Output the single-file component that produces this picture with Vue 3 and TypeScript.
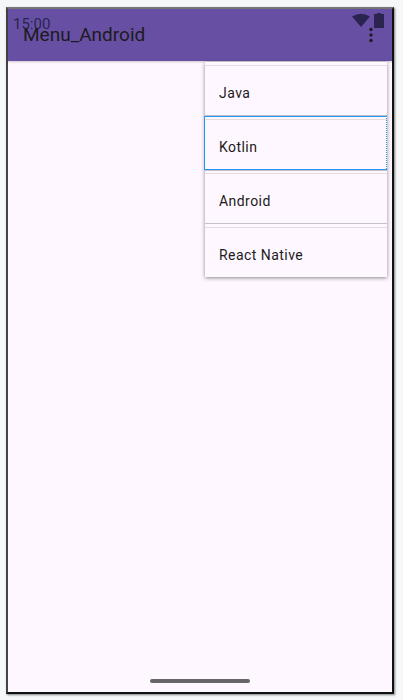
<script setup lang="ts">
const items = ['Java', 'Kotlin', 'Android', 'React Native']
</script>

<template>
  <div class="page">
    <div class="phone">
      <header class="app-bar">
        <span class="clock">15:00</span>
        <span class="title">Menu_Android</span>
        <svg class="wifi" width="18" height="14" viewBox="0 0 18 14">
          <path d="M0 3.5 Q9 -2 18 3.5 L9 14 Z" fill="#2b2350" />
        </svg>
        <svg class="battery" width="10" height="15" viewBox="0 0 10 15">
          <path d="M3 0 H7 V1 H10 V15 H0 V1 H3 Z" fill="#2b2350" />
        </svg>
        <svg class="more" width="6" height="16" viewBox="0 0 6 16">
          <circle cx="3" cy="2.5" r="1.7" fill="#1d1b20" />
          <circle cx="3" cy="8" r="1.7" fill="#1d1b20" />
          <circle cx="3" cy="13.5" r="1.7" fill="#1d1b20" />
        </svg>
      </header>
      <ul class="menu">
        <li v-for="item in items" :key="item" class="menu__item" :class="{ 'menu__item--focus': item === 'Kotlin' }">
          {{ item }}
        </li>
      </ul>
      <div class="home-bar"></div>
    </div>
  </div>
</template>

<style>
html,
body {
  margin: 0;
  background: #f6f7f9;
}
</style>

<style scoped>
.page {
  box-sizing: border-box;
  width: 403px;
  height: 700px;
  padding: 7px 9px 6px 6px;
  font-family: Roboto, "Liberation Sans", sans-serif;
}

.phone {
  position: relative;
  box-sizing: border-box;
  height: 100%;
  background: #fef7ff;
  border-style: solid;
  border-width: 2px;
  border-color: #777 #111 #111 #444;
  box-shadow: 1px 1px 2px rgba(0, 0, 0, 0.5);
}

.app-bar {
  position: relative;
  height: 52px;
  background: #6750a4;
  box-shadow: 0 1px 2px rgba(0, 0, 0, 0.2);
}

.clock {
  position: absolute;
  left: 5px;
  top: 7px;
  font-size: 15px;
  line-height: 16px;
  color: #2b2350;
}

.title {
  position: absolute;
  left: 15px;
  top: 15px;
  font-size: 19px;
  line-height: 22px;
  color: #1d1b20;
}

.wifi {
  position: absolute;
  left: 344px;
  top: 4px;
}

.battery {
  position: absolute;
  left: 366px;
  top: 4px;
}

.more {
  position: absolute;
  left: 360px;
  top: 18px;
}

.menu {
  position: absolute;
  left: 197px;
  top: 53px;
  width: 182px;
  margin: 0;
  padding: 0;
  list-style: none;
  background: #fef7ff;
  box-shadow: 0 1px 4px rgba(0, 0, 0, 0.45);
}

.menu__item {
  position: relative;
  box-sizing: border-box;
  display: flex;
  align-items: center;
  height: 54px;
  padding: 9px 14px 0;
  font-size: 14px;
  letter-spacing: 0.45px;
  color: #1d1b20;
  background: linear-gradient(#e3dde6, #e3dde6) 0 3px / 100% 1px no-repeat;
  border-bottom: 1px solid #c4c0c8;
}

.menu__item:last-child {
  height: 53px;
  border-bottom: 0;
}

.menu__item--focus {
  z-index: 1;
  border-bottom-color: transparent;
}

.menu__item--focus::after {
  content: "";
  position: absolute;
  inset: 0 0 -1px -1px;
  background: repeating-linear-gradient(#2196f3 0 1px, transparent 1px 2px) right / 1px 100% no-repeat;
  box-shadow: inset 1px 1px 0 #2196f3, inset 0 -1px 0 #2196f3, 0 1px 0 #c4c0c8;
}

.home-bar {
  position: absolute;
  left: 142px;
  bottom: 9px;
  width: 100px;
  height: 4px;
  border-radius: 2px;
  background: #666;
}
</style>
